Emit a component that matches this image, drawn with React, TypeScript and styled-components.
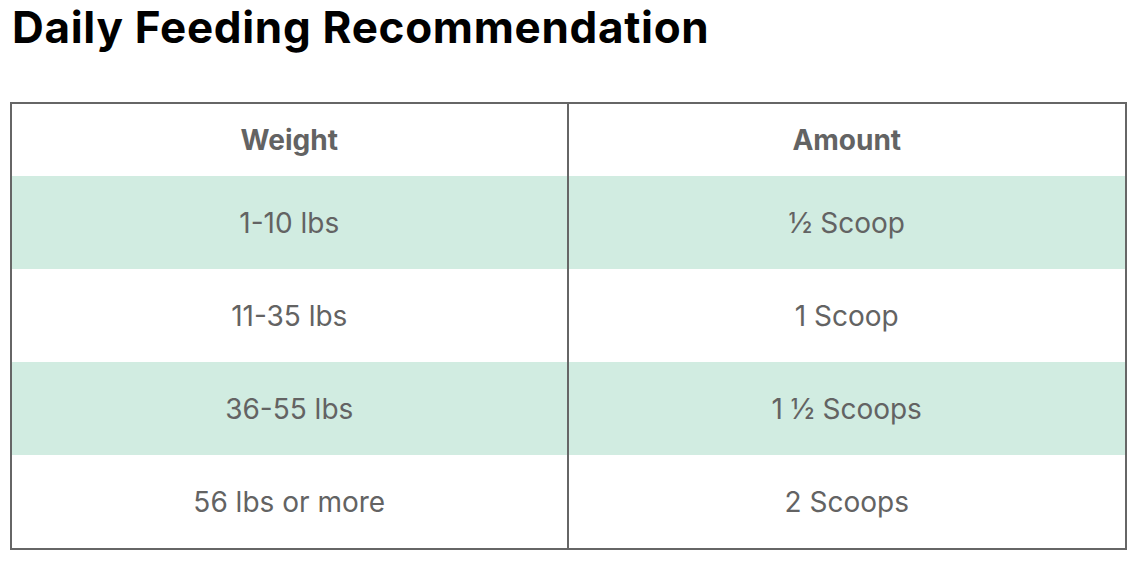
import React from "react";
import styled, { createGlobalStyle } from "styled-components";

const Global = createGlobalStyle`
  html, body { margin: 0; padding: 0; background: #fff; }
  body { font-family: Inter, "Noto Sans", sans-serif; }
`;

const Page = styled.div`
  padding: 0 20px 0 10px;
`;

const Title = styled.h1`
  margin: 0;
  padding: 1px 0 0 2px;
  font-size: 44px;
  font-weight: 700;
  line-height: 52px;
  color: #000;
  letter-spacing: 0.7px;
`;

const Table = styled.div`
  box-sizing: border-box;
  margin-top: 49px;
  width: 1117px;
  border: 2px solid #666;
  display: grid;
  grid-template-columns: 1fr 1fr;
`;

const Cell = styled.div<{ $shade?: boolean; $head?: boolean; $first?: boolean }>`
  height: ${(p) => (p.$head ? 72 : 93)}px;
  display: flex;
  align-items: center;
  justify-content: center;
  background: ${(p) => (p.$shade ? "#d1ece1" : "#fff")};
  color: #636363;
  font-size: 28px;
  font-weight: ${(p) => (p.$head ? 700 : 400)};
  border-right: ${(p) => (p.$first ? "2px solid #666" : "none")};
`;

const rows: [string, string][] = [
  ["1-10 lbs", "½ Scoop"],
  ["11-35 lbs", "1 Scoop"],
  ["36-55 lbs", "1 ½ Scoops"],
  ["56 lbs or more", "2 Scoops"],
];

export default function App() {
  return (
    <>
      <Global />
      <Page>
        <Title>Daily Feeding Recommendation</Title>
        <Table>
          <Cell $head $first>Weight</Cell>
          <Cell $head>Amount</Cell>
          {rows.map(([w, a], i) => (
            <React.Fragment key={w}>
              <Cell $first $shade={i % 2 === 0}>{w}</Cell>
              <Cell $shade={i % 2 === 0}>{a}</Cell>
            </React.Fragment>
          ))}
        </Table>
      </Page>
    </>
  );
}
